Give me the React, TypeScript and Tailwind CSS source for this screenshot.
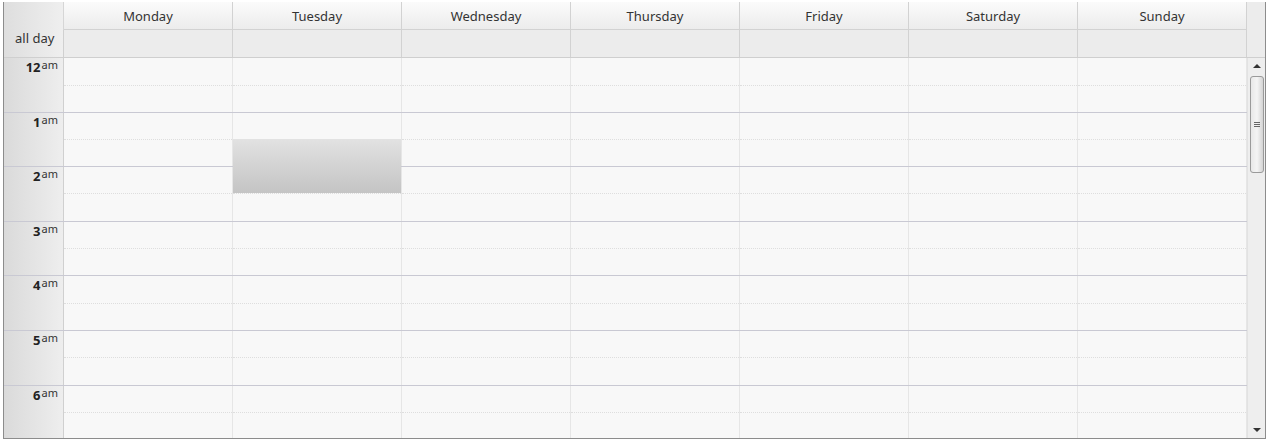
import React from "react";

const days = ["Monday", "Tuesday", "Wednesday", "Thursday", "Friday", "Saturday", "Sunday"];
const rows: { h: string; halves: [number, number] }[] = [
  { h: "12", halves: [28, 27] },
  { h: "1", halves: [27, 27] },
  { h: "2", halves: [27, 28] },
  { h: "3", halves: [27, 27] },
  { h: "4", halves: [28, 27] },
  { h: "5", halves: [27, 28] },
  { h: "6", halves: [27, 28] },
];

export default function App() {
  return (
    <div className="bg-white w-[1271px] h-[444px] pt-[2px] pl-[3px]" style={{ fontFamily: '"Noto Sans", "Open Sans", sans-serif' }}>
      <div className="w-[1263px] h-[437px] border-l border-r border-b border-[#8c8c8c] flex flex-col overflow-hidden">
        {/* header row */}
        <div className="flex h-[28px] shrink-0 bg-[#ececec]">
          <div className="w-[60px] border-r border-[#d6d6d6] bg-gradient-to-r from-[#dedede] to-[#efefef]" />
          {days.map((d) => (
            <div key={d} className="w-[169px] border-r border-b border-[#d2d2d2] bg-gradient-to-b from-[#fbfbfb] to-[#ececec] flex items-center justify-center text-[13px] text-[#333] pt-[3px]">
              {d}
            </div>
          ))}
          <div className="flex-1" />
        </div>
        {/* all day row */}
        <div className="flex h-[28px] shrink-0 bg-[#ececec] border-b border-[#cfcfcf]">
          <div className="w-[60px] border-r border-[#d0d0d0] bg-gradient-to-r from-[#dedede] to-[#efefef] text-[13px] leading-[16px] text-[#333] pl-[11px] pt-0">
            all day
          </div>
          {days.map((d) => (
            <div key={d} className="w-[169px] border-r border-[#d2d2d2]" />
          ))}
          <div className="flex-1" />
        </div>
        {/* body */}
        <div className="flex flex-1 min-h-0">
          <div className="flex-1 relative overflow-hidden bg-[#f8f8f8]">
            {rows.map((r) => (
              <div key={r.h} className="flex border-b border-[#c9c9d3]" style={{ height: r.halves[0] + r.halves[1] }}>
                <div className="w-[60px] shrink-0 border-r border-[#d0d0d0] bg-gradient-to-r from-[#dadada] to-[#eeeeee] flex justify-end items-start pr-[5px] pt-[1px] text-[#222]">
                  <span className="font-bold text-[13px] leading-[16px]">{r.h}</span>
                  <span className="text-[11px] leading-[11px] text-[#333] ml-[1px]">am</span>
                </div>
                {days.map((d) => (
                  <div key={d} className="w-[169px] shrink-0 border-r border-[#e6e6e6] flex flex-col">
                    <div className="border-b border-dotted border-[#dedede]" style={{ height: r.halves[0] }} />
                    <div className="flex-1" />
                  </div>
                ))}
              </div>
            ))}
            <div className="absolute left-[229px] top-[81px] w-[168px] h-[54px] bg-gradient-to-b from-[#e2e2e2] to-[#c4c4c4]" />
          </div>
          {/* scrollbar */}
          <div className="w-[18px] shrink-0 bg-[#eeeeee] border-l border-[#e2e2e2] flex flex-col items-center relative">
            <div className="mt-[6px] w-0 h-0 border-l-[4px] border-r-[4px] border-b-[4px] border-l-transparent border-r-transparent border-b-[#333]" />
            <div className="mt-[8px] w-[14px] h-[97px] rounded-[3px] border border-[#9a9a9a] bg-gradient-to-r from-[#e8e8e8] via-[#f4f4f4] to-[#d4d4d4] flex flex-col items-center justify-center gap-[1px]">
              <div className="w-[6px] h-[1px] bg-[#666]" />
              <div className="w-[6px] h-[1px] bg-[#666]" />
              <div className="w-[6px] h-[1px] bg-[#666]" />
            </div>
            <div className="absolute bottom-[6px] w-0 h-0 border-l-[4px] border-r-[4px] border-t-[4px] border-l-transparent border-r-transparent border-t-[#333]" />
          </div>
        </div>
      </div>
    </div>
  );
}
